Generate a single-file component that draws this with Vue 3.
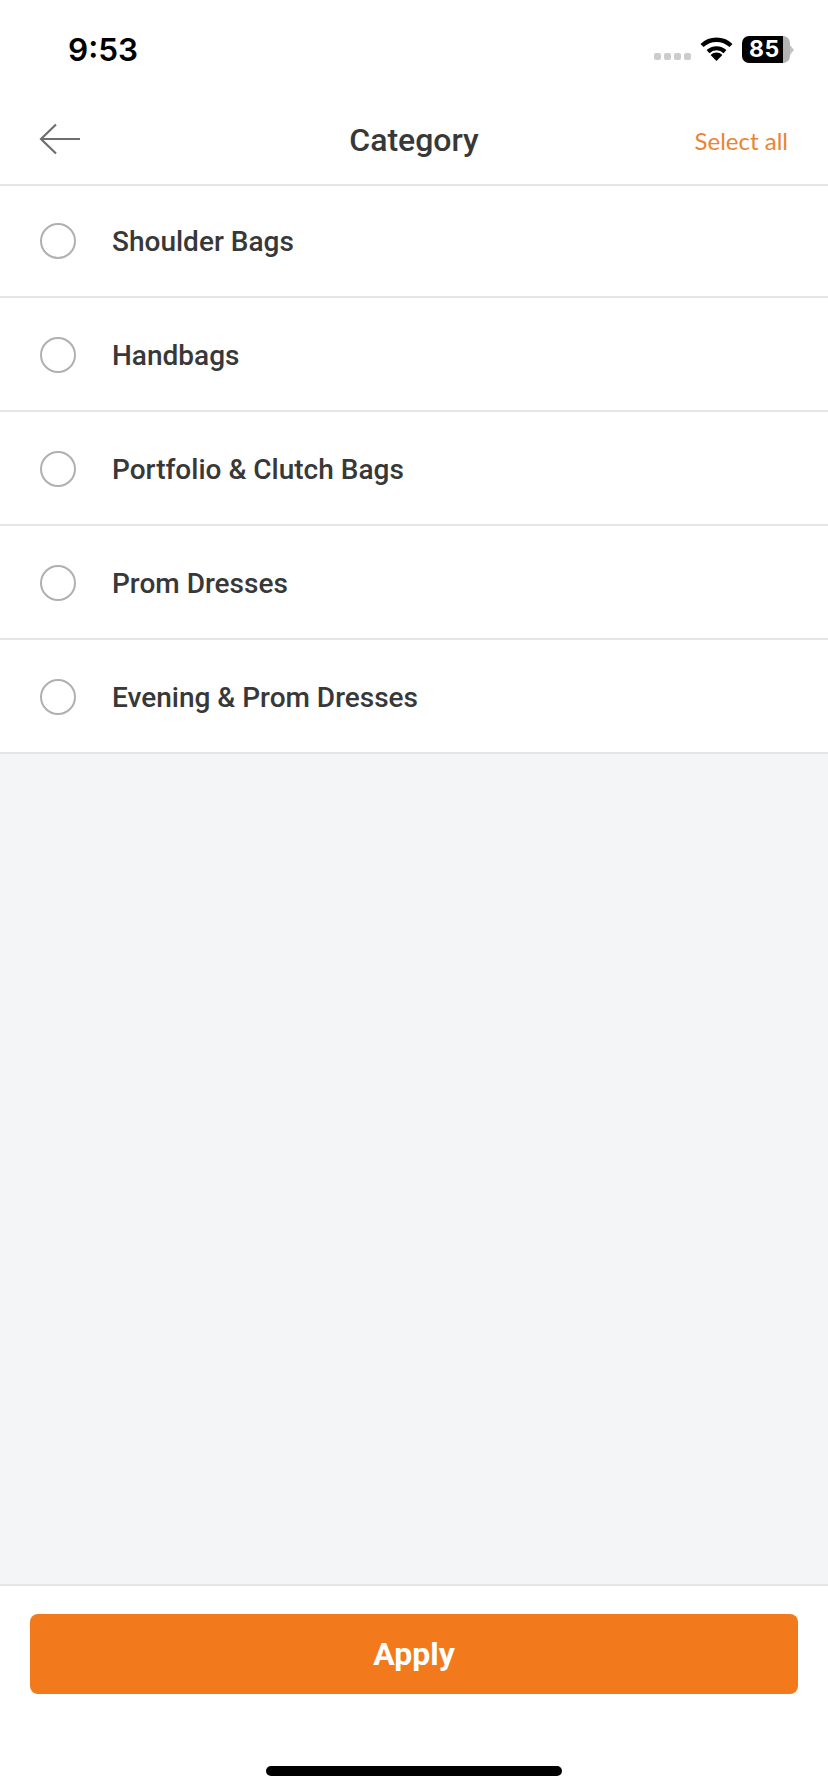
<template>
  <div class="page">
    <div class="status-bar">
      <span class="time">9:53</span>
      <div class="status-icons">
        <div class="signal">
          <i v-for="n in 4" :key="n"></i>
        </div>
        <svg class="wifi" width="33" height="24" viewBox="0 0 33 24">
          <path d="M2 8.5 A21 21 0 0 1 31 8.5" fill="none" stroke="#000" stroke-width="4.4" />
          <path d="M8 14.6 A12.5 12.5 0 0 1 25 14.6" fill="none" stroke="#000" stroke-width="4.2" />
          <path d="M16.5 24 L10.6 18 A8.4 8.4 0 0 1 22.4 18 Z" fill="#000" />
        </svg>
        <div class="battery">
          <div class="battery-body">
            <span class="battery-level">85</span>
          </div>
          <div class="battery-nub"></div>
        </div>
      </div>
    </div>

    <header class="nav">
      <button class="back" aria-label="Back">
        <svg width="42" height="32" viewBox="0 0 42 32">
          <path d="M41 16 H2 M17 1.5 L2 16 L17 30.5" fill="none" stroke="#6e6e6e" stroke-width="2.2" />
        </svg>
      </button>
      <h1 class="title">Category</h1>
      <a class="select-all">Select all</a>
    </header>

    <ul class="list">
      <li v-for="item in categories" :key="item" class="row">
        <span class="radio"></span>
        <span class="label">{{ item }}</span>
      </li>
    </ul>

    <div class="spacer"></div>

    <footer class="footer">
      <button class="apply">Apply</button>
      <div class="home-bar"></div>
    </footer>
  </div>
</template>

<script setup>
const categories = [
  'Shoulder Bags',
  'Handbags',
  'Portfolio & Clutch Bags',
  'Prom Dresses',
  'Evening & Prom Dresses',
]
</script>

<style>
body {
  margin: 0;
  background: #fff;
}
</style>

<style scoped>
.page {
  width: 828px;
  height: 1792px;
  display: flex;
  flex-direction: column;
  background: #fff;
  font-family: Roboto, "Liberation Sans", sans-serif;
  color: #383838;
}

.status-bar {
  height: 94px;
  box-sizing: border-box;
  display: flex;
  justify-content: space-between;
  padding: 29px 34px 0 68px;
}

.time {
  font-family: Inter, sans-serif;
  font-size: 31.5px;
  font-weight: 600;
  line-height: 42px;
  color: #000;
}

.status-icons {
  display: flex;
  align-items: flex-start;
  padding-top: 7px;
}

.signal {
  display: flex;
  gap: 3px;
  margin-top: 17px;
  margin-right: 9px;
}

.signal i {
  width: 7px;
  height: 7px;
  border-radius: 2px;
  background: #ccc;
}

.wifi {
  margin-top: 1px;
  margin-right: 9px;
}

.battery {
  display: flex;
  align-items: center;
}

.battery-body {
  width: 48px;
  height: 27px;
  box-sizing: border-box;
  border-radius: 7px;
  background: linear-gradient(to right, #000 41px, #b3b3b3 41px);
  padding-left: 7px;
}

.battery-level {
  display: block;
  font-family: Inter, sans-serif;
  font-size: 23px;
  font-weight: 700;
  line-height: 27px;
  letter-spacing: 0.5px;
  color: #fff;
}

.battery-nub {
  width: 0;
  height: 0;
  border-top: 5px solid transparent;
  border-bottom: 5px solid transparent;
  border-left: 4px solid #c4c4c4;
}

.nav {
  height: 92px;
  box-sizing: border-box;
  display: flex;
  align-items: center;
  justify-content: space-between;
  padding: 0 40px 0 39px;
  border-bottom: 2px solid #e5e5e5;
  position: relative;
}

.back {
  padding: 0;
  border: 0;
  background: none;
  display: flex;
}

.title {
  position: absolute;
  left: 0;
  right: 0;
  margin: 2px 0 0;
  text-align: center;
  font-size: 32px;
  font-weight: 500;
  pointer-events: none;
}

.select-all {
  margin-top: 2px;
  font-family: Lato, sans-serif;
  font-size: 24px;
  color: #ea8432;
}

.list {
  list-style: none;
  margin: 0;
  padding: 0;
}

.row {
  height: 114px;
  box-sizing: border-box;
  display: flex;
  align-items: center;
  padding: 2px 0 0 40px;
  border-bottom: 2px solid #e5e5e5;
}

.row:first-child {
  height: 112px;
  padding-top: 0;
}

.radio {
  width: 36px;
  height: 36px;
  box-sizing: border-box;
  border: 2px solid #b0b0b0;
  border-radius: 50%;
  margin-right: 36px;
}

.label {
  font-size: 28px;
  font-weight: 500;
}

.spacer {
  flex: 1;
  background: #f4f5f7;
}

.footer {
  border-top: 2px solid #e5e5e5;
  padding: 28px 30px 16px;
}

.apply {
  display: block;
  width: 100%;
  height: 80px;
  padding: 0;
  border: 0;
  border-radius: 8px;
  background: #f27a1c;
  color: #fff;
  font-family: Roboto, sans-serif;
  font-size: 32px;
  font-weight: 700;
}

.home-bar {
  width: 296px;
  height: 10px;
  margin: 72px auto 0;
  border-radius: 5px;
  background: #000;
}
</style>
